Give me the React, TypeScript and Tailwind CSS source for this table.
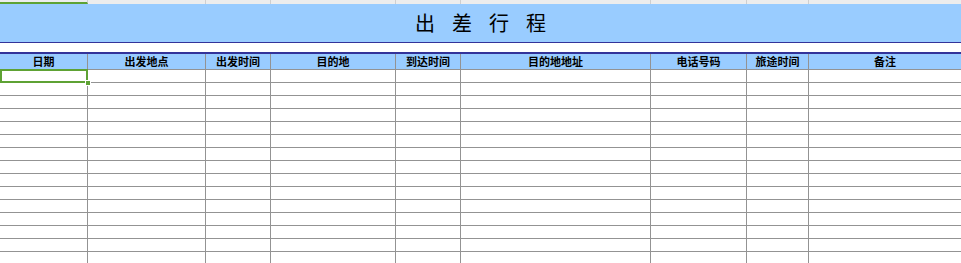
import React from 'react';

// 出差行程 sheet: column widths in px, last column fills the rest
const columns = [
  { title: '日期', w: 'w-[88px]' },
  { title: '出发地点', w: 'w-[118px]' },
  { title: '出发时间', w: 'w-[65px]' },
  { title: '目的地', w: 'w-[125px]' },
  { title: '到达时间', w: 'w-[65px]' },
  { title: '目的地地址', w: 'w-[190px]' },
  { title: '电话号码', w: 'w-[96px]' },
  { title: '旅途时间', w: 'w-[62px]' },
  { title: '备注', w: 'flex-1' },
];

const rowCount = 15;

const cellFont = { fontFamily: '"Noto Sans CJK SC", "Liberation Sans", sans-serif' };

// sliver of the column-letter bar above the sheet, column A highlighted
const TopStrip: React.FC = () => (
  <div className="flex h-[4px] bg-[#ededed] overflow-hidden">
    {columns.map((c, i) => (
      <div
        key={c.title}
        className={`${c.w} shrink-0 h-full ${i < columns.length - 1 ? 'border-r border-[#cfcfcf]' : ''} ${i === 0 ? 'border-b-2 border-b-[#5ea234]' : ''}`}
      />
    ))}
  </div>
);

export default function App() {
  return (
    <div className="w-[961px] h-[263px] bg-white overflow-hidden">
      <TopStrip />

      {/* title band */}
      <div className="h-[39px] bg-[#99ccff] border-b border-[#333399] flex items-center justify-center">
        <span
          className="text-[20px] text-black tracking-[17px] pl-[17px] leading-none"
          style={{ fontFamily: '"Noto Sans CJK SC", "Liberation Serif", serif' }}
        >
          出差行程
        </span>
      </div>

      <div className="h-[9px]" />

      {/* header row */}
      <div className="flex h-[18px] bg-[#99ccff] border-t-2 border-[#333399]">
        {columns.map((c, i) => (
          <div
            key={c.title}
            className={`${c.w} shrink-0 border-b border-[#939393] ${i < columns.length - 1 ? 'border-r' : ''} flex items-center justify-center text-[11px] font-bold text-black leading-none`}
            style={cellFont}
          >
            {c.title}
          </div>
        ))}
      </div>

      {/* empty data rows */}
      <div className="relative">
        {Array.from({ length: rowCount }).map((_, r) => (
          <div key={r} className="flex h-[13px]">
            {columns.map((c, i) => (
              <div
                key={c.title}
                className={`${c.w} shrink-0 border-b border-[#939393] ${i < columns.length - 1 ? 'border-r' : ''}`}
              />
            ))}
          </div>
        ))}

        {/* active cell A1 with fill handle */}
        <div className="absolute left-0 top-[-1px] w-[88px] h-[14px] border-2 border-[#5ea234]" />
        <div className="absolute left-[85px] top-[10px] w-[6px] h-[6px] bg-[#5ea234] border border-white" />
      </div>
    </div>
  );
}
